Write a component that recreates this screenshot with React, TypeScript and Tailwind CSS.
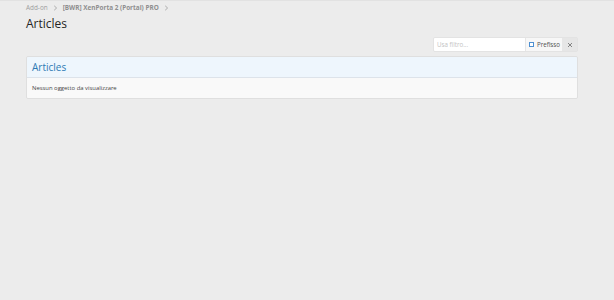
import React from 'react'

const Chevron = () => (
  <svg width="5" height="6" viewBox="0 0 5 6" className="mx-[5px]">
    <path d="M1.2 0.8 L3.6 3 L1.2 5.2" fill="none" stroke="#a6a6a6" strokeWidth="0.9" />
  </svg>
)

const App = () => {
  return (
    <div className="w-full min-h-[300px] bg-[#ececec] font-['Segoe_UI','Open_Sans',sans-serif]">
      <div className="h-[1px] bg-[#e2e2e2]" />
      <div className="pl-[26px] pr-[36px]">
        {/* breadcrumb */}
        <div className="flex items-center h-[11px] mt-[1px] text-[6.4px] text-[#9d9d9d]">
          <span>Add-on</span>
          <Chevron />
          <span className="font-bold text-[#8f8f8f]">[BWR] XenPorta 2 (Portal) PRO</span>
          <Chevron />
        </div>
        <h1 className="mt-[2px] text-[12px] leading-[17px] text-[#252525]">Articles</h1>

        {/* filter */}
        <div className="flex justify-end mt-[5px]">
          <div className="flex h-[15px] text-[6.2px] border border-[#e3e3e3] rounded-[2px] overflow-hidden">
            <div className="w-[91px] bg-white flex items-center px-[3px] text-[#c3c3c3]">Usa filtro...</div>
            <div className="w-[37px] bg-[#f7f7f7] border-l border-[#e6e6e6] flex items-center pl-[3px] text-[#505050]">
              <span className="w-[5px] h-[5px] border border-[#4d8fd1] bg-white mr-[3px]" />
              Prefisso
            </div>
            <div className="w-[15px] bg-[#e6e6e6] flex items-center justify-center">
              <svg width="6" height="6" viewBox="0 0 6 6">
                <path d="M1 1 L5 5 M5 1 L1 5" stroke="#777" strokeWidth="0.9" />
              </svg>
            </div>
          </div>
        </div>

        {/* block */}
        <div className="mt-[4px] border border-[#dfdfdf] rounded-[2px] overflow-hidden">
          <div className="h-[21px] bg-[#eef6fd] border-b border-[#dde3ea] flex items-center px-[5px] text-[10px] text-[#2d7ab4]">
            Articles
          </div>
          <div className="h-[20px] bg-[#f9f9f9] flex items-center px-[5px] text-[5.9px] text-[#454545]">
            Nessun oggetto da visualizzare
          </div>
        </div>
      </div>
    </div>
  )
}

export default App
